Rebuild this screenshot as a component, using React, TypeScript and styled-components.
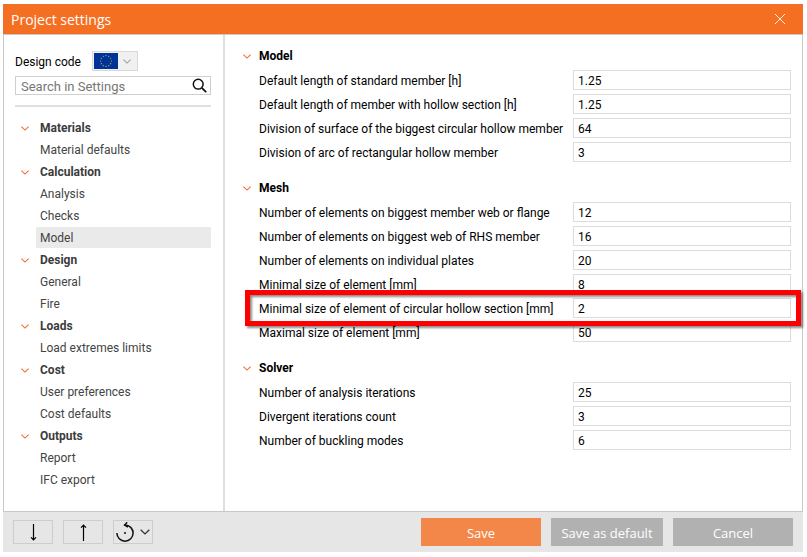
import React, { useState } from "react";
import styled, { createGlobalStyle, css } from "styled-components";

const GlobalStyle = createGlobalStyle`
  *, *::before, *::after { box-sizing: border-box; }
  body { margin: 0; background: #fff; }
  button, input, select { font: inherit; color: inherit; }
  button { padding: 0; border: 0; background: none; cursor: pointer; }
  ul { margin: 0; padding: 0; list-style: none; }
  svg { display: block; flex: none; }
`;

const Page = styled.div`
  min-height: 100vh;
  padding: 4px 4px 5px 3px;
  display: flex;
  font-family: Roboto, "Open Sans", sans-serif;
  font-size: 12px;
  line-height: 18px;
  color: #000;
`;

const Dialog = styled.section`
  flex: 1;
  min-width: 0;
  display: flex;
  flex-direction: column;
`;

const TitleBar = styled.header`
  height: 30px;
  display: flex;
  align-items: center;
  justify-content: space-between;
  padding: 0 16px 0 8px;
  background: #f56f23;
  color: #fff;
`;

const Title = styled.h1`
  margin: 0;
  padding-top: 2px;
  font-family: "Open Sans", sans-serif;
  font-size: 14px;
  font-weight: 400;
  line-height: 20px;
`;

const CloseButton = styled.button`
  display: grid;
  place-items: center;
  width: 14px;
  height: 20px;
`;

const Body = styled.div`
  flex: 1;
  display: flex;
  border: 1px solid #c8c8c8;
`;

const Sidebar = styled.aside`
  flex: none;
  width: 221px;
  padding: 16px 12px 20px 11px;
  border-right: 2px solid #dfdfdf;
`;

const CodeRow = styled.div`
  display: flex;
  align-items: center;
  gap: 12px;
  height: 20px;
`;

const CodeLabel = styled.label`
  width: 65px;
  padding-top: 2px;
  white-space: nowrap;
`;

const CodePicker = styled.div`
  position: relative;
  display: flex;
  align-items: center;
  gap: 5px;
  width: 46px;
  height: 20px;
  padding-left: 1px;
  border: 1px solid #d9d9d9;
  background: #f0f0f0;
`;

const CodeSelect = styled.select`
  position: absolute;
  inset: 0;
  width: 100%;
  height: 100%;
  opacity: 0;
`;

const SearchBox = styled.label`
  display: flex;
  align-items: center;
  height: 19px;
  margin-top: 5px;
  padding: 0 3px 0 5px;
  border: 1px solid #cfcfcf;
`;

const SearchInput = styled.input`
  flex: 1;
  min-width: 0;
  height: 17px;
  padding: 2px 0 0;
  border: 0;
  outline: 0;
  background: none;
  font-size: 13px;
  &::placeholder { color: #767676; opacity: 1; }
`;

const Rule = styled.hr`
  height: 2px;
  margin: 10px 0;
  border: 0;
  background: #dfdfdf;
`;

const GroupToggle = styled.button`
  display: flex;
  align-items: center;
  gap: 11px;
  width: 100%;
  height: 22px;
  padding-left: 6px;
  font-weight: 700;
  color: #3c3c3c;
`;

const NavLink = styled.a<{ $active?: boolean }>`
  display: block;
  height: 21px;
  margin: 0 0 1px 21px;
  padding-left: 4px;
  line-height: 22px;
  color: #444;
  text-decoration: none;
  ${(p) => p.$active && css`background: #eaeaea;`}
`;

const Main = styled.main`
  flex: 1;
  min-width: 0;
  padding: 9px 11px 20px 18px;
`;

const Section = styled.section`
  & + & { margin-top: 12px; }
`;

const SectionToggle = styled.button`
  display: flex;
  align-items: center;
  gap: 8px;
  height: 24px;
  font-weight: 700;
`;

const Field = styled.div<{ $highlight?: boolean }>`
  position: relative;
  display: grid;
  grid-template-columns: 314px minmax(0, 1fr);
  align-items: center;
  height: 24px;
  margin-left: 16px;
  ${(p) =>
    p.$highlight &&
    css`
      z-index: 1;
      &::after {
        content: "";
        position: absolute;
        inset: -6px -10px -6px -14px;
        border: 5px solid #fe0000;
        filter: drop-shadow(2px 2px 1px rgba(0, 0, 0, 0.45));
        pointer-events: none;
      }
    `}
`;

const FieldLabel = styled.label`
  padding-top: 2px;
  white-space: nowrap;
`;

const FieldInput = styled.input`
  width: 100%;
  height: 20px;
  padding: 2px 4px 0;
  border: 1px solid #dcdcdc;
  background: #fff;
`;

const Footer = styled.footer`
  display: flex;
  align-items: center;
  justify-content: space-between;
  height: 40px;
  padding: 0 10px;
  background: #e6e6e6;
`;

const ButtonRow = styled.div`
  display: flex;
  gap: 10px;
`;

const ToolButton = styled.button`
  display: flex;
  align-items: center;
  justify-content: center;
  gap: 6px;
  width: 40px;
  height: 24px;
  border: 1px solid #cdcdcd;
`;

const ActionButton = styled.button<{ $primary?: boolean; $compact?: boolean }>`
  width: ${(p) => (p.$compact ? 112 : 120)}px;
  height: 28px;
  padding-top: 2px;
  font-family: "Open Sans", sans-serif;
  font-size: 13px;
  color: #fff;
  background: ${(p) => (p.$primary ? "#f3874a" : "#b1b1b1")};
`;

const Chevron = ({ color = "#ee6f2d", width = 8 }: { color?: string; width?: number }) => (
  <svg width={width} height={width / 2 + 1} viewBox="0 0 8 5" fill="none" stroke={color} strokeWidth="1.1">
    <path d="M.4.6 4 4.1 7.6.6" />
  </svg>
);

const EuFlag = () => (
  <svg width="24" height="16" viewBox="0 0 24 16">
    <path fill="#003399" d="M0 0h24v16H0z" />
    {Array.from({ length: 12 }, (_, i) => (
      <circle
        key={i}
        cx={12 + 5.4 * Math.sin((i * Math.PI) / 6)}
        cy={8 - 5.4 * Math.cos((i * Math.PI) / 6)}
        r="0.6"
        fill="#c9bc32"
      />
    ))}
  </svg>
);

const SearchIcon = () => (
  <svg width="15" height="15" viewBox="0 0 15 15" fill="none" stroke="#111" strokeWidth="1.5">
    <circle cx="6.2" cy="6.2" r="4.9" />
    <path d="m9.8 9.8 4.4 4.4" strokeWidth="1.8" />
  </svg>
);

const DownArrow = () => (
  <svg width="7" height="17" viewBox="0 0 7 17" fill="none" stroke="#000" strokeWidth="1.2">
    <path d="M3.5 0v15.7M1 13.4l2.5 2.4L6 13.4" />
  </svg>
);

const UpArrow = () => (
  <svg width="7" height="17" viewBox="0 0 7 17" fill="none" stroke="#000" strokeWidth="1.2">
    <path d="M3.5 17V1.3M1 3.6l2.5-2.4L6 3.6" />
  </svg>
);

const ResetIcon = () => (
  <svg width="18" height="20" viewBox="0 0 18 20" fill="none" stroke="#111" strokeWidth="1.5">
    <path d="M.9 11.1A8.1 8.1 0 1 0 9 3H8.6" />
    <path d="M11.2.3 8.6 3 12 5.2" />
    <circle cx="9" cy="11" r="1" fill="#111" stroke="none" />
  </svg>
);

const groups = [
  { name: "Materials", items: ["Material defaults"] },
  { name: "Calculation", items: ["Analysis", "Checks", "Model"] },
  { name: "Design", items: ["General", "Fire"] },
  { name: "Loads", items: ["Load extremes limits"] },
  { name: "Cost", items: ["User preferences", "Cost defaults"] },
  { name: "Outputs", items: ["Report", "IFC export"] },
];

type FieldData = { label: string; value: string; highlight?: boolean };

const sections: { name: string; fields: FieldData[] }[] = [
  {
    name: "Model",
    fields: [
      { label: "Default length of standard member [h]", value: "1.25" },
      { label: "Default length of member with hollow section [h]", value: "1.25" },
      { label: "Division of surface of the biggest circular hollow member", value: "64" },
      { label: "Division of arc of rectangular hollow member", value: "3" },
    ],
  },
  {
    name: "Mesh",
    fields: [
      { label: "Number of elements on biggest member web or flange", value: "12" },
      { label: "Number of elements on biggest web of RHS member", value: "16" },
      { label: "Number of elements on individual plates", value: "20" },
      { label: "Minimal size of element [mm]", value: "8" },
      { label: "Minimal size of element of circular hollow section [mm]", value: "2", highlight: true },
      { label: "Maximal size of element [mm]", value: "50" },
    ],
  },
  {
    name: "Solver",
    fields: [
      { label: "Number of analysis iterations", value: "25" },
      { label: "Divergent iterations count", value: "3" },
      { label: "Number of buckling modes", value: "6" },
    ],
  },
];

export default function App() {
  const [page, setPage] = useState("Model");
  const [closed, setClosed] = useState<string[]>([]);
  const toggle = (key: string) =>
    setClosed((c) => (c.includes(key) ? c.filter((k) => k !== key) : [...c, key]));

  return (
    <Page>
      <GlobalStyle />
      <Dialog aria-labelledby="title">
        <TitleBar>
          <Title id="title">Project settings</Title>
          <CloseButton aria-label="Close">
            <svg width="10" height="10" viewBox="0 0 10 10" stroke="#fff" strokeWidth="0.9">
              <path d="m0 0 10 10M10 0 0 10" />
            </svg>
          </CloseButton>
        </TitleBar>
        <Body>
          <Sidebar>
            <CodeRow>
              <CodeLabel htmlFor="code">Design code</CodeLabel>
              <CodePicker>
                <EuFlag />
                <Chevron color="#a0a0a0" />
                <CodeSelect id="code">
                  <option>EN</option>
                </CodeSelect>
              </CodePicker>
            </CodeRow>
            <SearchBox>
              <SearchInput aria-label="Search in Settings" placeholder="Search in Settings" />
              <SearchIcon />
            </SearchBox>
            <Rule />
            <nav>
              {groups.map((g) => (
                <div key={g.name}>
                  <GroupToggle
                    aria-expanded={!closed.includes("nav" + g.name)}
                    onClick={() => toggle("nav" + g.name)}
                  >
                    <Chevron />
                    {g.name}
                  </GroupToggle>
                  {!closed.includes("nav" + g.name) && (
                    <ul>
                      {g.items.map((item) => (
                        <li key={item}>
                          <NavLink
                            href="#"
                            $active={item === page}
                            onClick={(e) => {
                              e.preventDefault();
                              setPage(item);
                            }}
                          >
                            {item}
                          </NavLink>
                        </li>
                      ))}
                    </ul>
                  )}
                </div>
              ))}
            </nav>
          </Sidebar>
          <Main>
            {sections.map((s) => (
              <Section key={s.name}>
                <SectionToggle aria-expanded={!closed.includes(s.name)} onClick={() => toggle(s.name)}>
                  <Chevron />
                  {s.name}
                </SectionToggle>
                {!closed.includes(s.name) &&
                  s.fields.map((f, i) => (
                    <Field key={f.label} $highlight={f.highlight}>
                      <FieldLabel htmlFor={s.name + i}>{f.label}</FieldLabel>
                      <FieldInput id={s.name + i} defaultValue={f.value} />
                    </Field>
                  ))}
              </Section>
            ))}
          </Main>
        </Body>
        <Footer>
          <ButtonRow>
            <ToolButton aria-label="Import"><DownArrow /></ToolButton>
            <ToolButton aria-label="Export"><UpArrow /></ToolButton>
            <ToolButton aria-label="Reset">
              <ResetIcon />
              <Chevron color="#333" width={10} />
            </ToolButton>
          </ButtonRow>
          <ButtonRow>
            <ActionButton $primary>Save</ActionButton>
            <ActionButton $compact>Save as default</ActionButton>
            <ActionButton>Cancel</ActionButton>
          </ButtonRow>
        </Footer>
      </Dialog>
    </Page>
  );
}
